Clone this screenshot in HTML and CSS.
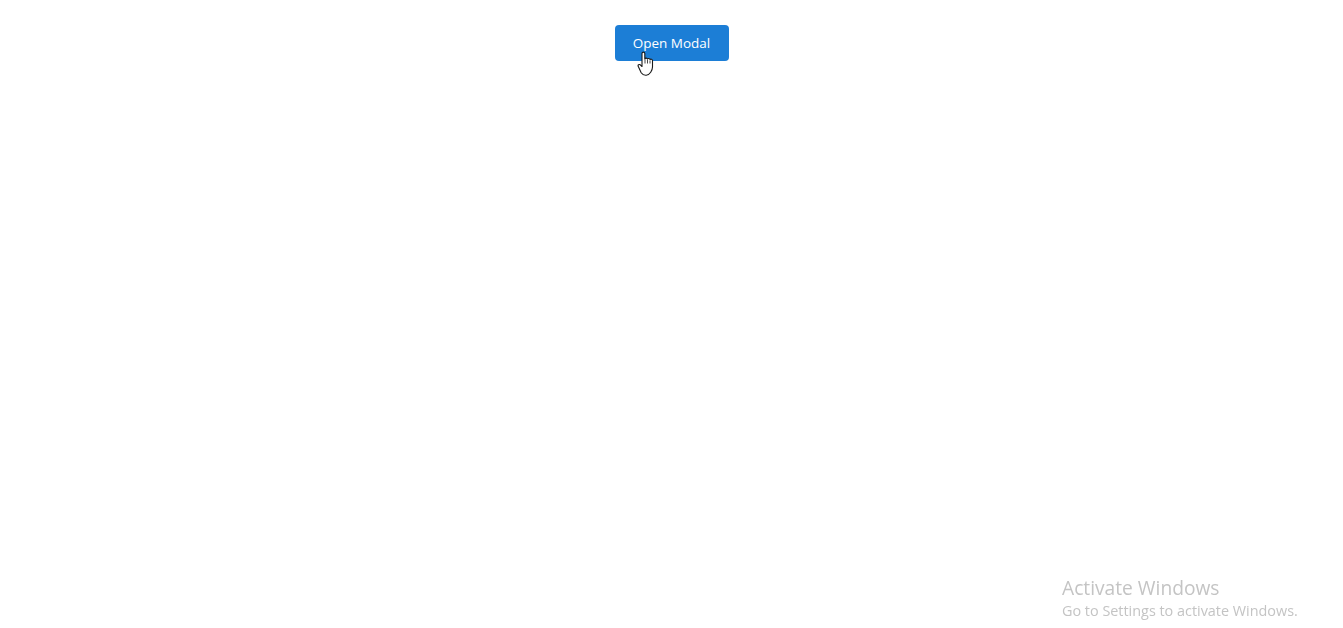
FILE: index.html
```html
<!DOCTYPE html>
<html lang="en">
<head>
    <meta charset="UTF-8">
    <meta name="viewport" content="width=device-width, initial-scale=1.0">
    <title>Modal Example</title>
    <link rel="stylesheet" href="styles.css">
</head>
<body>
    <div class="button-row">
        <button class="open-button">Open Modal</button>
        <svg class="cursor" width="18" height="26" viewBox="0 0 18 26">
            <path d="M5 2.500c0-1.800 2.800-1.800 2.800 0V8c.3-1.200 2.500-1.200 2.700.2.300-1 2.400-1 2.600.4.400-.8 2.400-.6 2.400 1v6.400c0 2.500-1 4-1.800 5.200-1 1.500-2.500 2.800-4.500 3-2.300.2-3.800-.8-5-2.500L1.300 15.500c-.8-1.400.8-2.600 2-1.700L5 15.500z" fill="#fff" stroke="#1a1a1a" stroke-width="1.100" stroke-linejoin="round"/>
            <path d="M8 8.500v4M10.500 9v3.500M13 9.500v3" fill="none" stroke="#1a1a1a" stroke-width="0.800"/>
        </svg>
    </div>
    <div class="activate-note">
        <div class="activate-title">Activate Windows</div>
        <div class="activate-text">Go to Settings to activate Windows.</div>
    </div>
</body>
</html>
```

FILE: styles.css
```css
html, body {
    height: 100%;
}

body {
    margin: 0;
    font-family: "Open Sans", "Noto Sans", sans-serif;
    background-color: #fff;
    overflow: hidden;
}

.button-row {
    position: relative;
    display: flex;
    justify-content: center;
    padding-top: 25px;
}

.open-button {
    width: 114px;
    height: 36px;
    padding: 0;
    background-color: #1c7ed6;
    border: none;
    border-radius: 4px;
    color: #fff;
    font-family: "Open Sans", "Noto Sans", sans-serif;
    font-size: 13.5px;
    font-weight: 500;
    cursor: pointer;
}

.cursor {
    position: absolute;
    left: 637px;
    top: 51px;
}

.activate-note {
    position: fixed;
    left: 1062px;
    top: 576px;
    color: #c4c4c4;
    white-space: nowrap;
}

.activate-title {
    font-size: 19.2px;
    line-height: 24px;
}

.activate-text {
    font-size: 14.4px;
    line-height: 22px;
}
```
